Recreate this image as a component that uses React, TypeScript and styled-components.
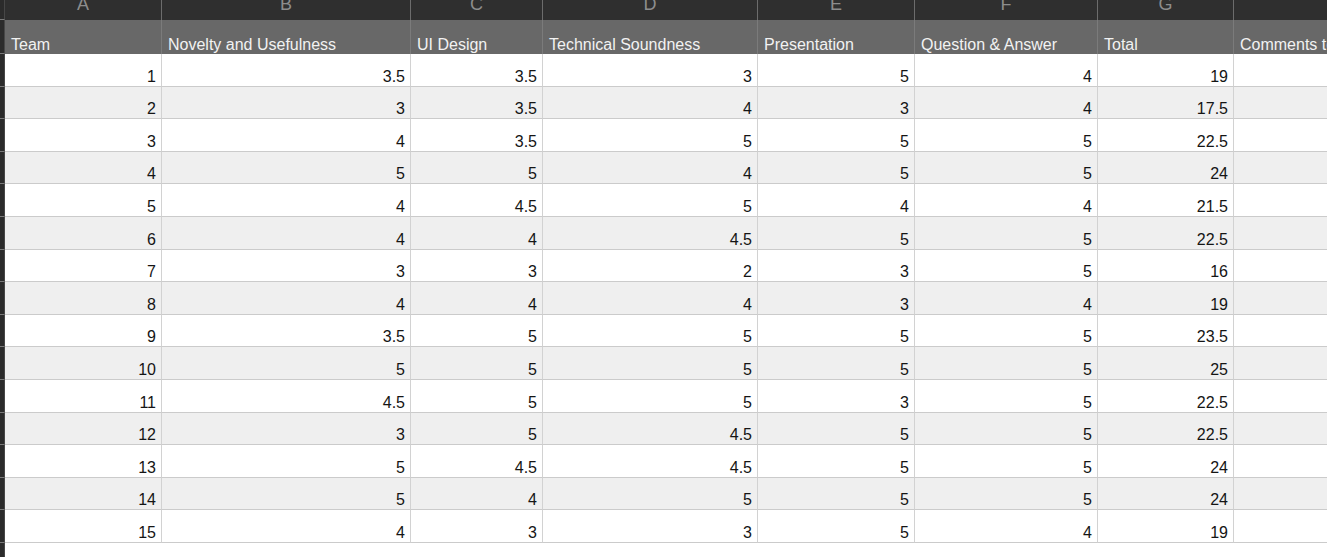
import { Fragment } from "react";
import styled, { createGlobalStyle } from "styled-components";

const GlobalStyle = createGlobalStyle`
  * {
    box-sizing: border-box;
  }
  html, body {
    margin: 0;
    padding: 0;
    overflow: hidden;
    background: #ffffff;
  }
  body {
    font-family: "Liberation Sans", Arial, Helvetica, sans-serif;
  }
`;

const Sheet = styled.div`
  display: grid;
  grid-template-columns: 5px 157px 249px 132px 215px 157px 183px 136px 220px;
  grid-template-rows: 20px 34px repeat(15, 32.6px) 1fr;
  width: 1454px;
  height: 100vh;
`;

const Strip = styled.div<{ $last?: boolean }>`
  background: #2b2b2b;
  border-right: 1px solid #474747;
  border-bottom: ${({ $last }) => ($last ? "none" : "1px solid #7a7a7a")};
`;

const LetterCell = styled.div`
  display: flex;
  justify-content: center;
  overflow: hidden;
  background: #2f2f2f;
  border-right: 1px solid #6c6c6c;
  color: #8d8d8d;
  font-size: 18px;
  line-height: 20px;
`;

const Letter = styled.span`
  margin-top: -6px;
`;

const HeaderCell = styled.div`
  display: flex;
  align-items: flex-end;
  overflow: hidden;
  white-space: nowrap;
  padding: 0 6px 0;
  background: #686868;
  border-right: 1px solid #7b7b7b;
  color: #f2f2f2;
  font-size: 16px;
  line-height: 18px;
`;

const DataCell = styled.div<{ $alt: boolean }>`
  display: flex;
  align-items: flex-end;
  justify-content: flex-end;
  overflow: hidden;
  white-space: nowrap;
  padding: 0 5px 0;
  background: ${({ $alt }) => ($alt ? "#efefef" : "#ffffff")};
  border-right: 1px solid #d2d2d2;
  border-bottom: 1px solid #cbcbcb;
  color: #151515;
  font-size: 16px;
  line-height: 18px;
`;

const Blank = styled.div`
  background: #ffffff;
`;

const letters = ["A", "B", "C", "D", "E", "F", "G", ""];

const headers = [
  "Team",
  "Novelty and Usefulness",
  "UI Design",
  "Technical Soundness",
  "Presentation",
  "Question & Answer",
  "Total",
  "Comments to the team",
];

const scores: number[][] = [
  [3.5, 3.5, 3, 5, 4],
  [3, 3.5, 4, 3, 4],
  [4, 3.5, 5, 5, 5],
  [5, 5, 4, 5, 5],
  [4, 4.5, 5, 4, 4],
  [4, 4, 4.5, 5, 5],
  [3, 3, 2, 3, 5],
  [4, 4, 4, 3, 4],
  [3.5, 5, 5, 5, 5],
  [5, 5, 5, 5, 5],
  [4.5, 5, 5, 3, 5],
  [3, 5, 4.5, 5, 5],
  [5, 4.5, 4.5, 5, 5],
  [5, 4, 5, 5, 5],
  [4, 3, 3, 5, 4],
];

const App = () => {
  return (
    <>
      <GlobalStyle />
      <Sheet>
        <Strip />
        {letters.map((l, i) => (
          <LetterCell key={i}>
            <Letter>{l}</Letter>
          </LetterCell>
        ))}

        <Strip />
        {headers.map((h) => (
          <HeaderCell key={h}>{h}</HeaderCell>
        ))}

        {scores.map((row, i) => {
          const total = row.reduce((a, b) => a + b, 0);
          const alt = i % 2 === 1;
          return (
            <Fragment key={i}>
              <Strip />
              <DataCell $alt={alt}>{i + 1}</DataCell>
              {row.map((v, j) => (
                <DataCell key={j} $alt={alt}>
                  {v}
                </DataCell>
              ))}
              <DataCell $alt={alt}>{total}</DataCell>
              <DataCell $alt={alt} />
            </Fragment>
          );
        })}

        <Strip $last />
        <Blank style={{ gridColumn: "2 / -1" }} />
      </Sheet>
    </>
  );
};

export default App;
